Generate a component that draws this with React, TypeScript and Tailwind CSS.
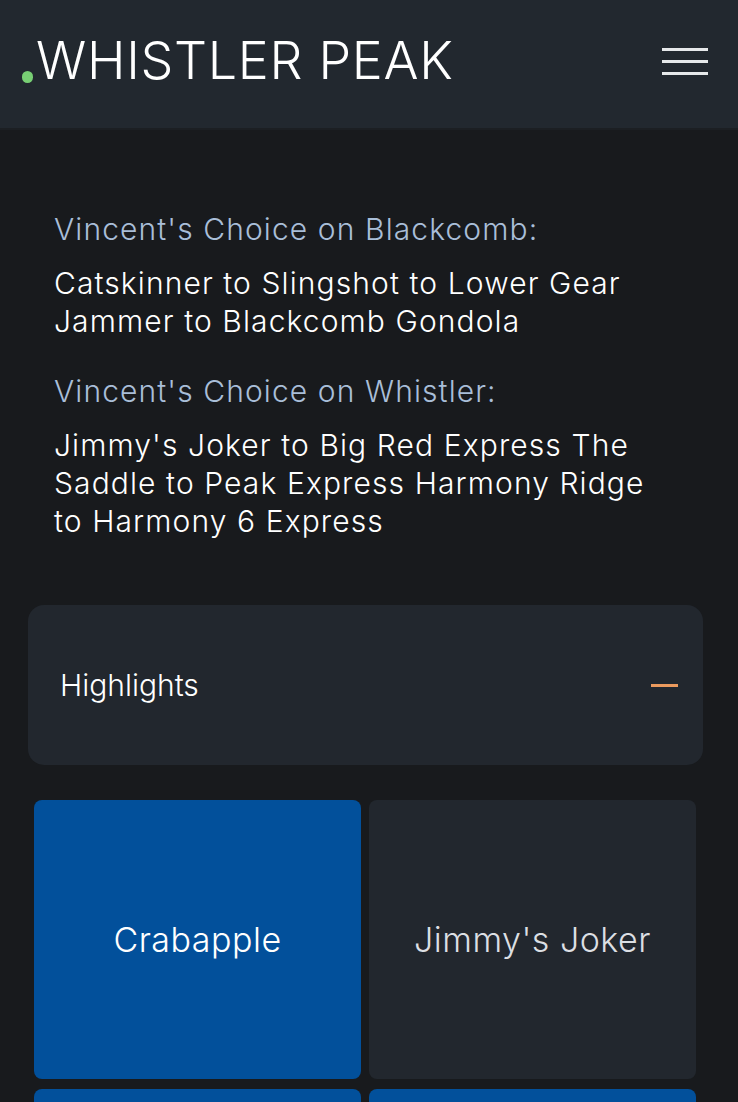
const ROUTES = [
  {
    title: "Vincent's Choice on Blackcomb:",
    path: 'Catskinner to Slingshot to Lower Gear Jammer to Blackcomb Gondola',
  },
  {
    title: "Vincent's Choice on Whistler:",
    path: "Jimmy's Joker to Big Red Express The Saddle to Peak Express Harmony Ridge to Harmony 6 Express",
  },
]

// second row is cut by the fold, only the tops show
const RUNS = [
  { name: 'Crabapple', active: true },
  { name: "Jimmy's Joker", active: false },
  { name: '', active: true },
  { name: '', active: true },
]

export default function App() {
  return (
    <div className="h-[1102px] overflow-hidden bg-[#181a1d] text-white font-['Inter',sans-serif]">
      <header className="h-[130px] bg-[#22282f] border-b-2 border-[#1c1f23] flex items-center justify-between pl-[22px] pr-[30px]">
        <div className="flex items-end -mt-[6px]">
          <span className="w-[11px] h-[12px] rounded-full bg-[#78cf74] mb-[4px] mr-[3px]" />
          <span className="text-[52px] leading-none font-light tracking-[0.7px] text-white">WHISTLER PEAK</span>
        </div>
        <button className="flex flex-col gap-[9px] w-[46px] -mt-[6px]">
          <span className="h-[3px] bg-[#e6e8ea]" />
          <span className="h-[3px] bg-[#e6e8ea]" />
          <span className="h-[3px] bg-[#e6e8ea]" />
        </button>
      </header>

      <section className="pl-[54px] pr-[70px] pt-[80px] pb-[65px] space-y-[32px]">
        {ROUTES.map((r) => (
          <div key={r.title}>
            <h2 className="text-[30px] leading-[38px] font-light tracking-[1.1px] text-[#a9bed8]">{r.title}</h2>
            <p className="mt-[16px] text-[30px] leading-[38px] font-light tracking-[1.1px] text-white">{r.path}</p>
          </div>
        ))}
      </section>

      <div className="ml-[28px] mr-[35px] h-[160px] rounded-[16px] bg-[#22272e] flex items-center justify-between pl-[32px] pr-[25px]">
        <span className="text-[30px] font-light text-white">Highlights</span>
        <span className="w-[27px] h-[3px] bg-[#eb9a5e]" />
      </div>

      <div className="grid grid-cols-2 gap-x-[8px] gap-y-[10px] pl-[34px] pr-[42px] pt-[35px] pb-8">
        {RUNS.map((run, i) => (
          <div
            key={i}
            className={`h-[279px] rounded-[8px] flex items-center justify-center text-center px-4 text-[34px] font-light tracking-[0.5px] ${
              run.active ? 'bg-[#02509b] text-white' : 'bg-[#22272e] text-[#dcdfe3]'
            }`}
          >
            {run.name}
          </div>
        ))}
      </div>
    </div>
  )
}
